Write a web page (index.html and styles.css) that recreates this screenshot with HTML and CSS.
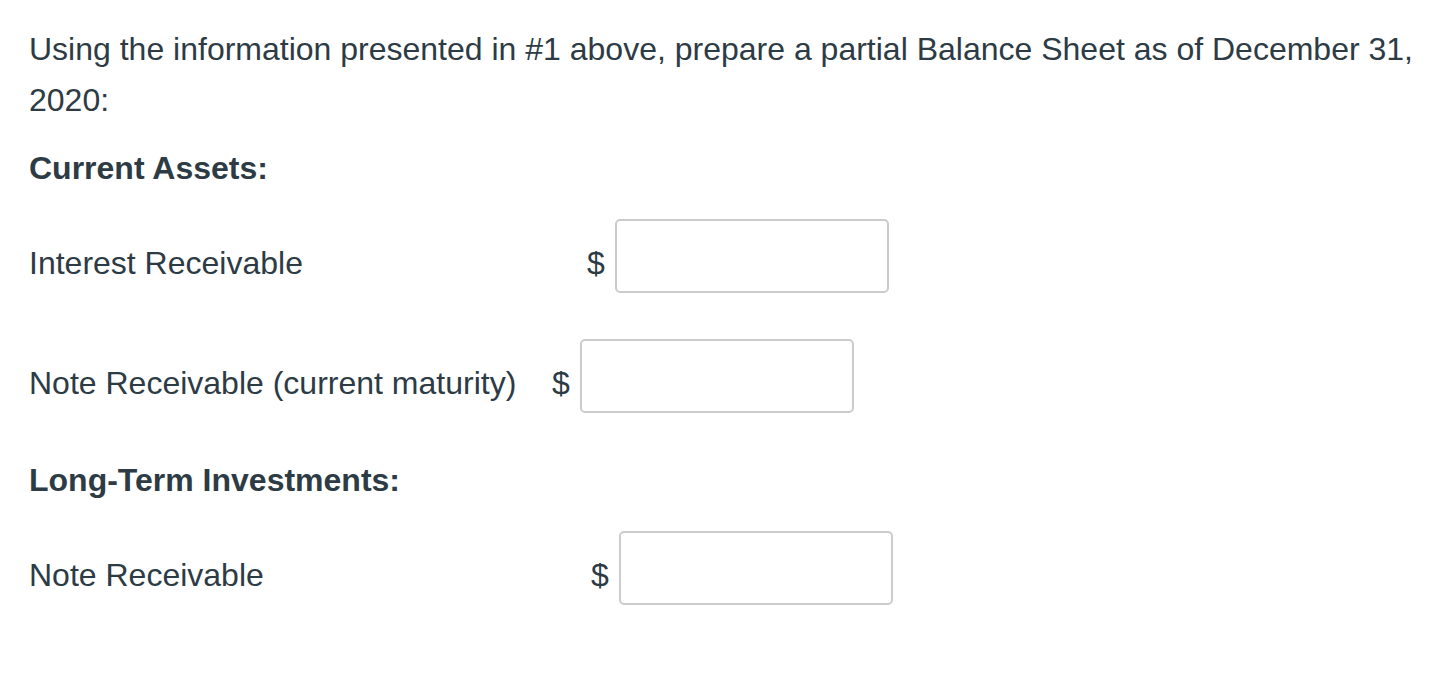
FILE: index.html
```html
<!DOCTYPE html>
<html>
<head>
<meta charset="utf-8">
<link rel="stylesheet" href="styles.css">
</head>
<body>
<div class="page">
  <p class="intro">Using the information presented in #1 above, prepare a partial Balance Sheet as of December 31, 2020:</p>
  <h3 class="section first">Current Assets:</h3>
  <div class="row">
    <span class="label w1">Interest Receivable</span>
    <span class="dollar">$</span>
    <input class="amount" type="text">
  </div>
  <div class="row gap-big">
    <span class="label w2">Note Receivable (current maturity)</span>
    <span class="dollar">$</span>
    <input class="amount" type="text">
  </div>
  <h3 class="section second">Long-Term Investments:</h3>
  <div class="row">
    <span class="label w3">Note Receivable</span>
    <span class="dollar">$</span>
    <input class="amount" type="text">
  </div>
</div>
</body>
</html>
```
FILE: styles.css
```css
html, body {
  margin: 0;
  padding: 0;
  background: #ffffff;
}
.page {
  padding: 24px 20px 0 29px;
  font-family: "Liberation Sans", Arial, Helvetica, sans-serif;
  font-size: 32px;
  line-height: 51px;
  color: #2d3b45;
}
.intro {
  margin: 0;
}
.section {
  margin: 17px 0 0 0;
  font-size: 32px;
  font-weight: bold;
  line-height: 51px;
}
.section.second {
  margin-top: 42px;
}
.row {
  display: flex;
  align-items: center;
  margin-top: 25px;
}
.row.gap-big {
  margin-top: 46px;
}
.label {
  display: inline-block;
  flex: none;
  padding-top: 14px;
}
.w1 { width: 558px; }
.w2 { width: 523px; }
.w3 { width: 562px; }
.dollar {
  flex: none;
  width: 28px;
  padding-top: 14px;
}
.amount {
  box-sizing: border-box;
  width: 274px;
  height: 74px;
  border: 2px solid #cccccc;
  border-radius: 5px;
  background: #fff;
  margin: 0;
  padding: 0 10px;
  font: inherit;
  outline: none;
}
```
